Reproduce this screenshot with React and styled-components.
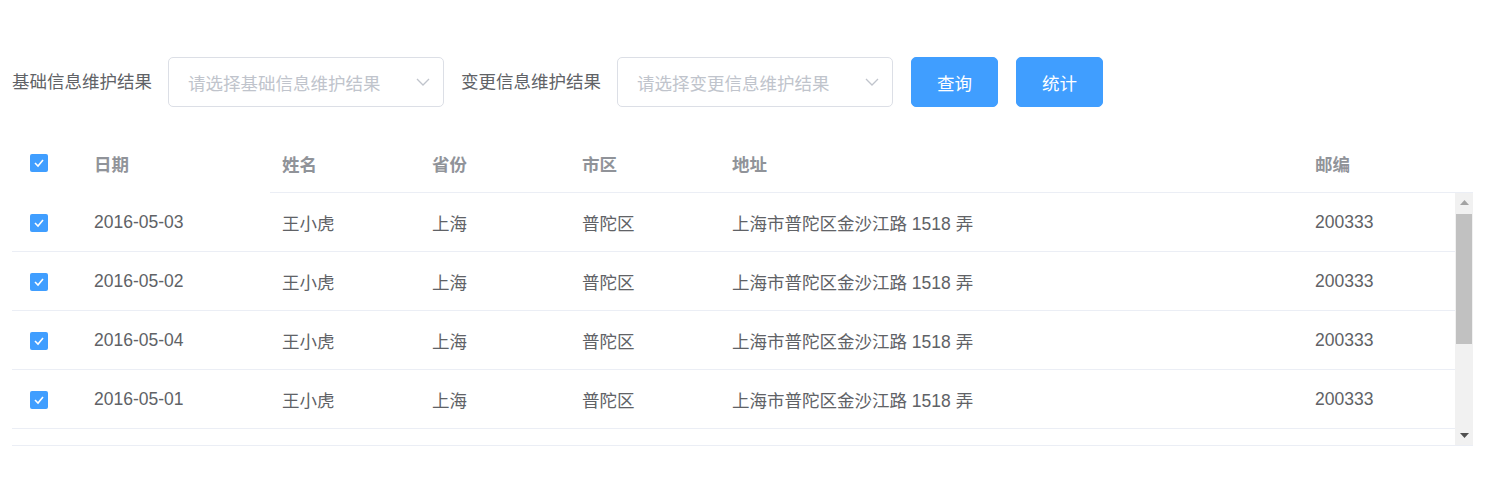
import React from "react";
import styled, { createGlobalStyle } from "styled-components";

const Global = createGlobalStyle`
  html, body { margin: 0; padding: 0; background: #fff; }
  body { font-family: "Liberation Sans", "Noto Sans CJK SC", sans-serif; }
  * { box-sizing: border-box; }
`;

const Page = styled.div`
  padding: 57px 0 0 12px;
  width: 1502px;
`;

const Form = styled.form`
  display: flex;
  align-items: center;
  height: 50px;
  margin-bottom: 27px;
`;

const Label = styled.label`
  font-size: 17.5px;
  color: #606266;
  line-height: 50px;
  width: ${(p) => p.$w}px;
  white-space: nowrap;
`;

const Select = styled.div`
  width: 276px;
  height: 50px;
  border: 1px solid #dcdfe6;
  border-radius: 5px;
  display: flex;
  align-items: center;
  justify-content: space-between;
  padding: 0 12px 0 19px;
  margin-right: ${(p) => p.$mr || 0}px;
`;

const Placeholder = styled.span`
  font-size: 17.5px;
  color: #c0c4cc;
  white-space: nowrap;
`;

const Button = styled.button`
  height: 50px;
  width: 87px;
  border: 1px solid #409eff;
  background: #409eff;
  color: #fff;
  border-radius: 5px;
  font-family: inherit;
  font-size: 17.5px;
  padding: 0;
  margin-right: 18px;
  cursor: pointer;
`;

const Table = styled.div`
  width: 1461px;
  border-bottom: 1px solid #ebeef5;
`;

const cols = "70px 188px 150px 150px 150px 583px 152px";

const HeadRow = styled.div`
  display: grid;
  grid-template-columns: ${cols} 18px;
  height: 59px;
`;

const HeadCell = styled.div`
  display: flex;
  align-items: center;
  padding-left: ${(p) => (p.$sel ? 18 : 12)}px;
  font-size: 17.5px;
  font-weight: bold;
  color: #909399;
  border-bottom: 1px solid ${(p) => (p.$fixed ? "transparent" : "#ebeef5")};
`;

const Body = styled.div`
  display: flex;
  height: 252px;
`;

const Rows = styled.div`
  width: 1443px;
  height: 252px;
`;

const Row = styled.div`
  display: grid;
  grid-template-columns: ${cols};
  height: 59px;
`;

const Cell = styled.div`
  display: flex;
  align-items: center;
  padding-left: ${(p) => (p.$sel ? 18 : 12)}px;
  padding-top: 1px;
  font-size: 17.5px;
  color: #606266;
  border-bottom: 1px solid #ebeef5;
  white-space: nowrap;
`;

const Check = styled.span`
  width: 18px;
  height: 18px;
  border-radius: 2px;
  background: #409eff;
  display: inline-flex;
  align-items: center;
  justify-content: center;
`;

const Scrollbar = styled.div`
  width: 18px;
  height: 252px;
  background: #f1f1f1;
  display: flex;
  flex-direction: column;
`;

const Arrow = styled.div`
  height: 19px;
  display: flex;
  align-items: center;
  justify-content: center;
`;

const Thumb = styled.div`
  margin: 2px 1px 0;
  height: 130px;
  background: #c1c1c1;
`;

const Track = styled.div`
  flex: 1;
`;

const CheckBox = () => (
  <Check>
    <svg width="12" height="10" viewBox="0 0 12 10">
      <polyline points="2,5 5,8 10,2" fill="none" stroke="#fff" strokeWidth="1.6" />
    </svg>
  </Check>
);

const Chevron = () => (
  <svg width="16" height="10" viewBox="0 0 16 10">
    <polyline points="2,2 8,8 14,2" fill="none" stroke="#c0c4cc" strokeWidth="1.3" />
  </svg>
);

const rows = ["2016-05-03", "2016-05-02", "2016-05-04", "2016-05-01"];

export default function App() {
  return (
    <Page>
      <Global />
      <Form>
        <Label $w={156}>基础信息维护结果</Label>
        <Select $mr={17}>
          <Placeholder>请选择基础信息维护结果</Placeholder>
          <Chevron />
        </Select>
        <Label $w={156}>变更信息维护结果</Label>
        <Select $mr={18}>
          <Placeholder>请选择变更信息维护结果</Placeholder>
          <Chevron />
        </Select>
        <Button type="button">查询</Button>
        <Button type="button">统计</Button>
      </Form>
      <Table>
        <HeadRow>
          <HeadCell $sel $fixed>
            <CheckBox />
          </HeadCell>
          <HeadCell $fixed>日期</HeadCell>
          <HeadCell>姓名</HeadCell>
          <HeadCell>省份</HeadCell>
          <HeadCell>市区</HeadCell>
          <HeadCell>地址</HeadCell>
          <HeadCell>邮编</HeadCell>
          <HeadCell />
        </HeadRow>
        <Body>
          <Rows>
            {rows.map((d) => (
              <Row key={d}>
                <Cell $sel>
                  <CheckBox />
                </Cell>
                <Cell>{d}</Cell>
                <Cell>王小虎</Cell>
                <Cell>上海</Cell>
                <Cell>普陀区</Cell>
                <Cell>上海市普陀区金沙江路 1518 弄</Cell>
                <Cell>200333</Cell>
              </Row>
            ))}
          </Rows>
          <Scrollbar>
            <Arrow>
              <svg width="9" height="5" viewBox="0 0 9 5">
                <polygon points="0,5 4.5,0 9,5" fill="#a3a3a3" />
              </svg>
            </Arrow>
            <Thumb />
            <Track />
            <Arrow>
              <svg width="9" height="5" viewBox="0 0 9 5">
                <polygon points="0,0 4.5,5 9,0" fill="#505050" />
              </svg>
            </Arrow>
          </Scrollbar>
        </Body>
      </Table>
    </Page>
  );
}
